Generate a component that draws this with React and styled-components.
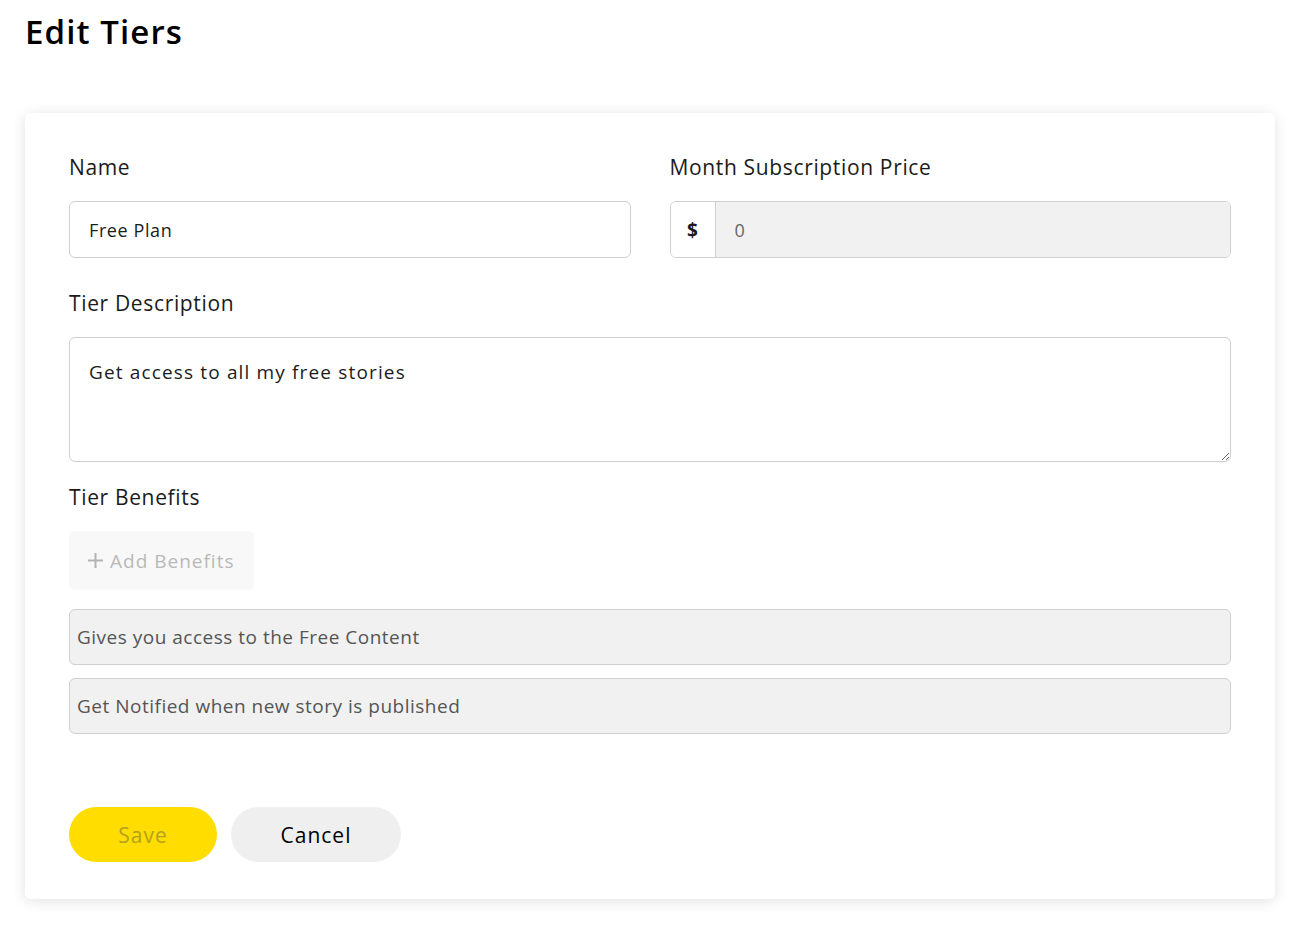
import React from "react";
import styled, { createGlobalStyle } from "styled-components";

const GlobalStyle = createGlobalStyle`
  body {
    margin: 0;
    background: #ffffff;
    font-family: "Open Sans", "Liberation Sans", sans-serif;
    color: #1b1b1b;
  }
`

const Page = styled.div`
  padding: 8px 25px 28px 25px;
`

const Title = styled.h1`
  margin: 0 0 57px 0;
  font-size: 33px;
  font-weight: 600;
  letter-spacing: 1.1px;
  line-height: 48px;
  color: #000;
`

const Card = styled.div`
  background: #fff;
  border-radius: 6px;
  box-shadow: 0 2px 14px rgba(0, 0, 0, 0.12);
  padding: 39px 44px 37px 44px;
`

const Row = styled.div`
  display: grid;
  grid-template-columns: 1fr 1fr;
  gap: 39px;
`

const Group = styled.div`
  display: flex;
  flex-direction: column;
  margin-bottom: ${p => p.$mb || 0}px;
`

const Label = styled.label`
  font-size: 21px;
  font-weight: 500;
  letter-spacing: 0.65px;
  line-height: 30px;
  margin-bottom: 19px;
  color: #1b1b1b;
`

const TextInput = styled.input`
  box-sizing: border-box;
  height: 57px;
  width: 100%;
  padding: 0 19px;
  border: 1px solid #cfcfcf;
  border-radius: 6px;
  font-family: inherit;
  font-size: 18px;
  letter-spacing: 0.6px;
  color: #1b1b1b;
  background: ${p => (p.$muted ? "#f1f1f1" : "#fff")};
  outline: none;
`

const PriceBox = styled.div`
  box-sizing: border-box;
  display: flex;
  height: 57px;
  border: 1px solid #cfcfcf;
  border-radius: 6px;
  overflow: hidden;
`

const Addon = styled.span`
  width: 44px;
  display: flex;
  align-items: center;
  justify-content: center;
  font-size: 19px;
  font-weight: 700;
  border-right: 1px solid #cfcfcf;
  background: #fff;
`

const PriceInput = styled.input`
  flex: 1;
  border: none;
  background: #f1f1f1;
  padding: 0 19px;
  font-family: inherit;
  font-size: 18px;
  color: #666;
  outline: none;
`

const TextArea = styled.textarea`
  display: block;
  box-sizing: border-box;
  width: 100%;
  height: 125px;
  padding: 20px 19px;
  border: 1px solid #cfcfcf;
  border-radius: 6px;
  font-family: inherit;
  font-size: 19px;
  letter-spacing: 1.15px;
  line-height: 28px;
  color: #1b1b1b;
  resize: vertical;
  outline: none;
`

const AddButton = styled.button`
  align-self: flex-start;
  box-sizing: border-box;
  width: 185px;
  height: 59px;
  padding: 0 0 0 18px;
  border: none;
  border-radius: 6px;
  background: #f8f8f8;
  color: #b8b8b8;
  font-family: inherit;
  font-size: 19px;
  letter-spacing: 1px;
  display: flex;
  align-items: center;
  gap: 6px;
  margin-bottom: 19px;
`

const BenefitInput = styled(TextInput)`
  padding: 0 7px;
  font-size: 19px;
  letter-spacing: 0.5px;
  color: #555;
  margin-bottom: 13px;
  height: 56px;
`

const Actions = styled.div`
  display: flex;
  gap: 14px;
  margin-top: 60px;
`

const Pill = styled.button`
  height: 55px;
  width: ${p => p.$w}px;
  border: none;
  border-radius: 28px;
  font-family: inherit;
  font-size: 21px;
  font-weight: 500;
  letter-spacing: 1px;
  background: ${p => p.$bg};
  color: ${p => p.$color};
`

const PlusIcon = () => (
  <svg width="17" height="17" viewBox="0 0 17 17">
    <path d="M8.5 1v15M1 8.5h15" stroke="#b3b3b3" strokeWidth="2" />
  </svg>
)

export default function App() {
  return (
    <>
      <GlobalStyle />
      <Page>
        <Title>Edit Tiers</Title>
        <Card>
          <Row>
            <Group $mb={30}>
              <Label>Name</Label>
              <TextInput defaultValue="Free Plan" />
            </Group>
            <Group $mb={30}>
              <Label>Month Subscription Price</Label>
              <PriceBox>
                <Addon>$</Addon>
                <PriceInput defaultValue="0" />
              </PriceBox>
            </Group>
          </Row>
          <Group $mb={20}>
            <Label>Tier Description</Label>
            <TextArea defaultValue="Get access to all my free stories" />
          </Group>
          <Group>
            <Label>Tier Benefits</Label>
            <AddButton>
              <PlusIcon />
              Add Benefits
            </AddButton>
            <BenefitInput $muted defaultValue="Gives you access to the Free Content" />
            <BenefitInput $muted defaultValue="Get Notified when new story is published" />
          </Group>
          <Actions>
            <Pill $w={148} $bg="#ffdd00" $color="#b4a21e">Save</Pill>
            <Pill $w={170} $bg="#efefef" $color="#000">Cancel</Pill>
          </Actions>
        </Card>
      </Page>
    </>
  );
}
